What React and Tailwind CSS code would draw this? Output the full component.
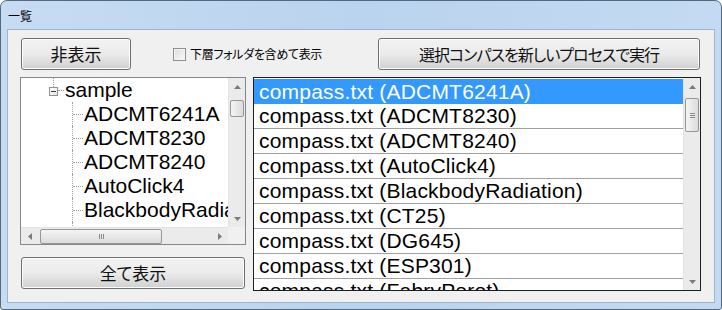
import React from 'react'

const jp = "font-['Noto_Sans_CJK_JP',sans-serif] [font-feature-settings:'palt']"
const latin = "font-['Liberation_Sans','Noto_Sans_CJK_JP',sans-serif]"
const dot = 'border-dotted border-[#a0a0a0]'

const treeItems = ['ADCMT6241A', 'ADCMT8230', 'ADCMT8240', 'AutoClick4', 'BlackbodyRadiation', 'CT25']

const listItems = [
  'ADCMT6241A',
  'ADCMT8230',
  'ADCMT8240',
  'AutoClick4',
  'BlackbodyRadiation',
  'CT25',
  'DG645',
  'ESP301',
  'FabryPerot',
]

function Arrow({ dir }) {
  const pts = {
    up: '0,4 3.5,0 7,4',
    down: '0,0 3.5,4 7,0',
    left: '4,0 0,3.5 4,7',
    right: '0,0 4,3.5 0,7',
  }[dir]
  const vert = dir === 'up' || dir === 'down'
  return (
    <svg width={vert ? 7 : 4} height={vert ? 4 : 7} viewBox={vert ? '0 0 7 4' : '0 0 4 7'}>
      <polygon points={pts} fill="#7b7b7b" />
    </svg>
  )
}

function Button({ className, children }) {
  return (
    <div
      className={`flex items-center justify-center rounded-[3px] border border-[#707070] bg-gradient-to-b from-[#f2f2f2] via-[#ebebeb] to-[#d0d0d0] text-[#111] shadow-[inset_0_0_0_1px_#fcfcfc] ${jp} ${className}`}
    >
      {children}
    </div>
  )
}

function VScroll({ thumbTop, thumbHeight, grip }) {
  return (
    <div className="flex h-full w-[17px] flex-col bg-[#ebebeb] border-l border-[#e3e3e3]">
      <div className="flex h-[17px] items-center justify-center">
        <Arrow dir="up" />
      </div>
      <div className="flex-1 flex flex-col">
        <div style={{ height: thumbTop }} />
        <div
          className="mx-[1px] flex items-center justify-center rounded-[2px] border border-[#979797] bg-gradient-to-r from-[#f4f4f4] to-[#dcdcdc]"
          style={{ height: thumbHeight }}
        >
          {grip && (
            <div className="flex flex-col gap-[1px]">
              <div className="h-[1px] w-[5px] bg-[#8a8a8a]" />
              <div className="h-[1px] w-[5px] bg-[#8a8a8a]" />
              <div className="h-[1px] w-[5px] bg-[#8a8a8a]" />
            </div>
          )}
        </div>
      </div>
      <div className="flex h-[17px] items-center justify-center">
        <Arrow dir="down" />
      </div>
    </div>
  )
}

function Tree() {
  return (
    <div className="grid h-[168px] w-[226px] grid-cols-[1fr_17px] grid-rows-[1fr_17px] border border-[#828790] bg-white">
      <div className={`overflow-hidden ${latin} text-[21px] leading-[24px] text-black`}>
        <div className="flex h-[24px] items-stretch">
          <div className="w-[28px]" />
          <div className="flex w-[9px] flex-col items-center">
            <div className={`h-[9px] w-0 border-l ${dot}`} />
            <div className="flex h-[9px] w-[9px] items-center justify-center border border-[#919191] bg-gradient-to-br from-white to-[#e6e6e6]">
              <div className="h-[1px] w-[5px] bg-[#3a3a3a]" />
            </div>
          </div>
          <div className="flex w-[6px] items-center">
            <div className={`w-full border-t ${dot}`} />
          </div>
          <span className="pl-[1px]">sample</span>
        </div>
        {treeItems.map((name) => (
          <div key={name} className="flex h-[24px] items-stretch whitespace-nowrap">
            <div className="w-[51px] shrink-0" />
            <div className={`flex w-[11px] shrink-0 items-center border-l ${dot}`}>
              <div className={`w-full border-t ${dot}`} />
            </div>
            <span className="pl-[1px]">{name}</span>
          </div>
        ))}
      </div>
      <VScroll thumbTop={5} thumbHeight={17} />
      <div className="flex h-[17px] items-center bg-[#ebebeb] border-t border-[#e3e3e3]">
        <div className="flex w-[17px] justify-center">
          <Arrow dir="left" />
        </div>
        <div className="flex-1 flex items-center">
          <div className="w-[2px]" />
          <div className="flex h-[15px] w-[122px] items-center justify-center gap-[1px] rounded-[2px] border border-[#979797] bg-gradient-to-b from-[#f4f4f4] to-[#dcdcdc]">
            <div className="h-[5px] w-[1px] bg-[#8a8a8a]" />
            <div className="h-[5px] w-[1px] bg-[#8a8a8a]" />
            <div className="h-[5px] w-[1px] bg-[#8a8a8a]" />
          </div>
        </div>
        <div className="flex w-[17px] justify-center">
          <Arrow dir="right" />
        </div>
      </div>
      <div className="bg-[#f0f0f0]" />
    </div>
  )
}

function ListBox() {
  return (
    <div className="flex h-[214px] w-[448px] border border-[#1e1e1e] bg-white">
      <div className={`flex-1 overflow-hidden pt-[1px] ${latin} text-[21px] tracking-[0.2px] text-black`}>
        {listItems.map((name, i) => (
          <div
            key={name}
            className={`flex h-[25px] items-center whitespace-nowrap pl-[5px] ${
              i === 0 ? 'bg-[#3399ff] text-white' : 'border-b border-[#a0a0a0]'
            }`}
          >
            compass.txt ({name})
          </div>
        ))}
      </div>
      <VScroll thumbTop={3} thumbHeight={34} grip />
    </div>
  )
}

export default function App() {
  return (
    <div className="flex h-[310px] w-[722px] flex-col overflow-hidden rounded-t-[7px] rounded-b-[3px] border border-[#56687d] bg-gradient-to-r from-[#c6dcf3] via-[#bad3ee] to-[#c3daf2]">
      <div className={`flex h-[28px] items-center pl-[7px] pt-[1px] text-[12px] text-black ${jp}`}>一覧</div>
      <div className="mx-[6px] mb-[6px] flex-1 border border-[#9fb3c9] bg-[#f0f0f0]">
        <div className="flex h-[40px] items-end pl-[13px]">
          <Button className="h-[32px] w-[110px] text-[17px]">非表示</Button>
          <div className="mb-[7px] ml-[42px] flex items-center">
            <div className="h-[13px] w-[13px] border border-[#8f8f8f] bg-gradient-to-br from-[#dcdcdc] to-[#fafafa] shadow-[inset_0_0_0_1px_#f4f4f4]" />
            <span className={`ml-[4px] text-[12px] tracking-[-0.3px] text-black ${jp}`}>下層フォルダを含めて表示</span>
          </div>
          <Button className="ml-auto mr-[14px] h-[32px] w-[322px] text-[16px] tracking-[-1px]">
            選択コンパスを新しいプロセスで実行
          </Button>
        </div>
        <div className="mt-[7px] flex pl-[12px]">
          <div className="flex w-[226px] flex-col">
            <Tree />
            <Button className="ml-[1px] mt-[12px] h-[32px] w-[224px] text-[17px]">全て表示</Button>
          </div>
          <div className="ml-[7px]">
            <ListBox />
          </div>
        </div>
      </div>
    </div>
  )
}
